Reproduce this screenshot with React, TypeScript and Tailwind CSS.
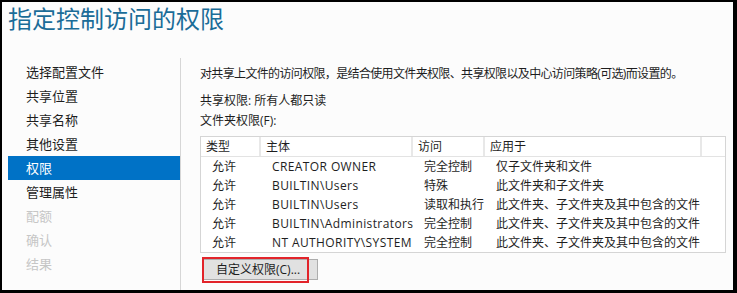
import React from 'react';

const navItems = [
  { label: '选择配置文件' },
  { label: '共享位置' },
  { label: '共享名称' },
  { label: '其他设置' },
  { label: '权限', active: true },
  { label: '管理属性' },
  { label: '配额', disabled: true },
  { label: '确认', disabled: true },
  { label: '结果', disabled: true },
];

const rows = [
  ['允许', 'CREATOR OWNER', '完全控制', '仅子文件夹和文件'],
  ['允许', 'BUILTIN\\Users', '特殊', '此文件夹和子文件夹'],
  ['允许', 'BUILTIN\\Users', '读取和执行', '此文件夹、子文件夹及其中包含的文件'],
  ['允许', 'BUILTIN\\Administrators', '完全控制', '此文件夹、子文件夹及其中包含的文件'],
  ['允许', 'NT AUTHORITY\\SYSTEM', '完全控制', '此文件夹、子文件夹及其中包含的文件'],
];

const font = { fontFamily: '"Open Sans", "Noto Sans CJK SC", sans-serif' };

export default function App() {
  return (
    <div
      className="w-[737px] h-[293px] overflow-hidden bg-[#fcfcfc] border-black border-l-2 border-t-2 border-r-[4px] border-b-[3px] flex flex-col text-[#1e1e1e]"
      style={font}
    >
      {/* Title */}
      <div className="h-[56px] pl-[6px] pt-[1px]">
        <h1 className="text-[24px] leading-[32px] text-[#1a6c98]">指定控制访问的权限</h1>
      </div>

      <div className="flex flex-1 min-h-0">
        {/* Sidebar */}
        <div className="w-[179px] pt-[2px] border-r border-[#d6d6d6]">
          <ul className="ml-[6px]">
            {navItems.map((item) => (
              <li
                key={item.label}
                className={`h-[24px] leading-[24px] pl-[18px] text-[13px] ${
                  item.active
                    ? 'bg-[#0072c6] text-white'
                    : item.disabled
                    ? 'text-[#c6c6c6]'
                    : 'text-[#1e1e1e]'
                }`}
              >
                {item.label}
              </li>
            ))}
          </ul>
        </div>

        {/* Content */}
        <div className="flex-1 pl-[19px] pt-[8px] text-[12px]">
          <p className="leading-[16px] tracking-[-0.65px] whitespace-nowrap">
            对共享上文件的访问权限，是结合使用文件夹权限、共享权限以及中心访问策略(可选)而设置的。
          </p>
          <p className="leading-[16px] mt-[11px]">共享权限: 所有人都只读</p>
          <p className="leading-[16px] mt-[4px]">文件夹权限(F):</p>

          {/* Table */}
          <div className="mt-[7px] w-[526px] border border-[#d5d5d5] bg-white">
            <div className="flex h-[20px] leading-[19px] border-b border-[#e3e3e3]">
              <div className="w-[60px] pl-[5px] border-r-2 border-[#e8e8e8]">类型</div>
              <div className="w-[152px] pl-[5px] border-r-2 border-[#e8e8e8]">主体</div>
              <div className="w-[72px] pl-[5px] border-r-2 border-[#e8e8e8]">访问</div>
              <div className="w-[217px] pl-[5px] border-r-2 border-[#e8e8e8]">应用于</div>
              <div className="flex-1" />
            </div>
            {rows.map((r, i) => (
              <div key={i} className="flex h-[19px] leading-[19px] whitespace-nowrap">
                <div className="w-[60px] pl-[11px]">{r[0]}</div>
                <div className="w-[152px] pl-[11px] tracking-[0.4px]">{r[1]}</div>
                <div className="w-[72px] pl-[11px]">{r[2]}</div>
                <div className="w-[217px] pl-[11px]">{r[3]}</div>
              </div>
            ))}
          </div>

          {/* Button */}
          <div className="relative mt-[6px] ml-[3px] w-fit">
            <button className="w-[115px] h-[21px] bg-[#e1e1e1] border border-[#adadad] text-[12px] leading-[19px] text-left pl-[12px] text-[#1e1e1e]">
              自定义权限(C)...
            </button>
            <div className="absolute left-[-1px] top-[-2px] w-[107px] h-[26px] border-2 border-[#e2242a] pointer-events-none" />
          </div>
        </div>
      </div>
    </div>
  );
}
